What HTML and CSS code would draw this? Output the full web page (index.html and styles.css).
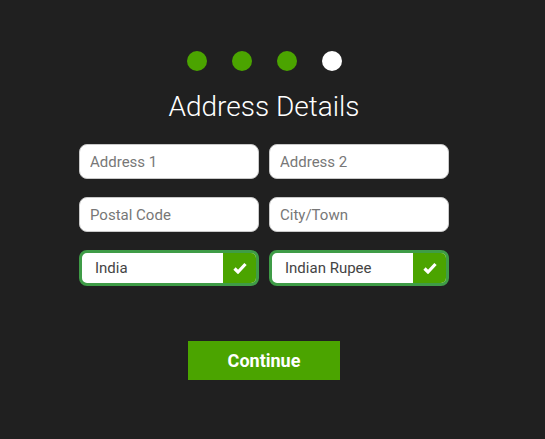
FILE: index.html
```html
<!DOCTYPE html>
<html>
<head>
<meta charset="utf-8">
<link rel="stylesheet" href="styles.css">
</head>
<body>
<div class="wrap">
  <div class="steps">
    <span class="dot done"></span>
    <span class="dot done"></span>
    <span class="dot done"></span>
    <span class="dot current"></span>
  </div>
  <h1 class="title">Address Details</h1>
  <div class="grid">
    <input class="field" type="text" placeholder="Address 1">
    <input class="field" type="text" placeholder="Address 2">
    <input class="field" type="text" placeholder="Postal Code">
    <input class="field" type="text" placeholder="City/Town">
    <div class="select"><span class="value">India</span><span class="check"><svg width="14" height="12" viewBox="0 0 14 12"><path d="M1.5 6.5 L5 10 L12.5 2" fill="none" stroke="#fff" stroke-width="3.2" stroke-linejoin="miter"/></svg></span></div>
    <div class="select"><span class="value">Indian Rupee</span><span class="check"><svg width="14" height="12" viewBox="0 0 14 12"><path d="M1.5 6.5 L5 10 L12.5 2" fill="none" stroke="#fff" stroke-width="3.2" stroke-linejoin="miter"/></svg></span></div>
  </div>
  <div class="actions">
    <button class="btn" type="button">Continue</button>
  </div>
</div>
</body>
</html>
```
FILE: styles.css
```css
html, body {
  margin: 0;
  padding: 0;
  background: #202020;
  height: 100%;
}
body {
  font-family: Roboto, "Liberation Sans", sans-serif;
}
.wrap {
  width: 370px;
  margin-left: 79px;
  padding-top: 51px;
  display: flex;
  flex-direction: column;
  align-items: center;
}
.steps {
  display: flex;
  gap: 25px;
  height: 20px;
}
.dot {
  width: 20px;
  height: 20px;
  border-radius: 50%;
  background: #4ba400;
}
.dot.current {
  background: #ffffff;
}
.title {
  margin: 18px 0 0 0;
  font-size: 28px;
  font-weight: 300;
  color: #ffffff;
  line-height: 36px;
  height: 36px;
}
.grid {
  margin-top: 19px;
  width: 370px;
  display: grid;
  grid-template-columns: 180px 180px;
  column-gap: 10px;
  row-gap: 18px;
}
.field {
  box-sizing: border-box;
  height: 35px;
  width: 180px;
  margin: 0;
  border: 1px solid #c9c9c9;
  border-radius: 8px;
  background: #fff;
  padding: 0 10px;
  font-family: Roboto, "Liberation Sans", sans-serif;
  font-size: 15px;
  color: #444;
  outline: none;
}
.field::placeholder {
  color: #777;
}
.select {
  box-sizing: border-box;
  height: 36px;
  width: 180px;
  border: 3px solid #3f9c47;
  border-radius: 8px;
  background: #fff;
  display: flex;
  overflow: hidden;
}
.value {
  flex: 1;
  display: flex;
  align-items: center;
  padding-left: 13px;
  font-size: 15px;
  color: #444;
}
.check {
  width: 33px;
  background: #4ba400;
  display: flex;
  align-items: center;
  justify-content: center;
}
.actions {
  margin-top: 55px;
}
.btn {
  width: 152px;
  height: 39px;
  border: 0;
  border-radius: 0;
  background: #4ba400;
  color: #fff;
  font-family: Roboto, "Liberation Sans", sans-serif;
  font-weight: 700;
  font-size: 18px;
  cursor: pointer;
}
```
